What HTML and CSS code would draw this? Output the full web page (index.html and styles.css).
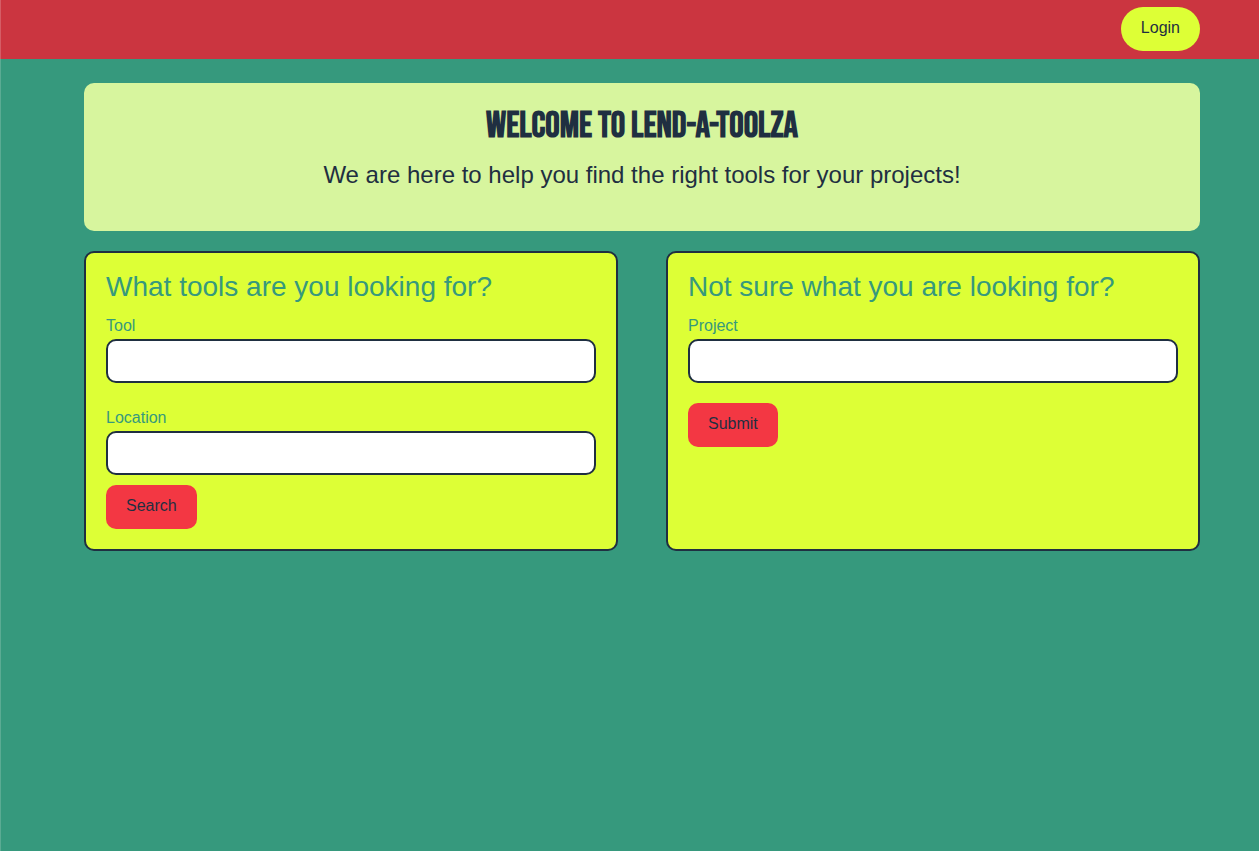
FILE: index.html
```html
<!DOCTYPE html>
<html lang="en">
<head>
<meta charset="utf-8">
<meta name="viewport" content="width=device-width, initial-scale=1">
<title>Lend-A-Toolza</title>
<link rel="stylesheet" href="styles.css">
</head>
<body>
<header class="navbar">
  <button class="btn btn-login" type="button">Login</button>
</header>
<main class="container">
  <section class="banner">
    <h1 class="banner-title">WELCOME TO LEND-A-TOOLZA</h1>
    <p class="banner-text">We are here to help you find the right tools for your projects!</p>
  </section>
  <div class="cards">
    <form class="card">
      <h2 class="card-title">What tools are you looking for?</h2>
      <label class="label" for="tool">Tool</label>
      <input class="input" id="tool" type="text">
      <label class="label label-next" for="location">Location</label>
      <input class="input" id="location" type="text">
      <button class="btn btn-search" type="submit">Search</button>
    </form>
    <form class="card">
      <h2 class="card-title">Not sure what you are looking for?</h2>
      <label class="label" for="project">Project</label>
      <input class="input" id="project" type="text">
      <button class="btn btn-submit" type="submit">Submit</button>
    </form>
  </div>
</main>
</body>
</html>
```
FILE: styles.css
```css
* {
  box-sizing: border-box;
}

body {
  display: flex;
  flex-direction: column;
  margin: 0;
  min-height: 100vh;
  background: #36997d;
  color: #1f2f41;
  font: 16px/24px "Liberation Sans", Arial, sans-serif;
}

.navbar {
  display: flex;
  justify-content: flex-end;
  padding: 7px 59px 8px 83px;
  border-left: 1px solid #d55d66;
  background: #cb3540;
}

.container {
  flex: 1;
  padding: 24px 59px 24px 83px;
  border-left: 1px solid #5bab93;
}

.banner {
  padding: 20px 20px 36px;
  border-radius: 10px;
  background: #d7f59e;
  text-align: center;
}

.banner-title {
  margin: 0 0 4px;
  font: bold 36px/48px "Bebas Neue", "DejaVu Sans Condensed", sans-serif;
}

.banner-text {
  margin: 0;
  font-size: 24px;
  line-height: 40px;
}

.cards {
  display: grid;
  grid-template-columns: 1fr 1fr;
  gap: 48px;
  margin-top: 20px;
}

.card {
  padding: 20px;
  border: 2px solid #1f2f41;
  border-radius: 10px;
  background: #ddff36;
  color: #36997d;
}

.card-title {
  margin: 0 0 14px;
  font-size: 28px;
  font-weight: 400;
  line-height: 28px;
}

.label {
  display: block;
  padding-bottom: 2px;
  line-height: 22px;
}

.label-next {
  margin-top: 24px;
}

.input {
  display: block;
  width: 100%;
  height: 44px;
  padding: 8px 12px;
  border: 2px solid #1f2f41;
  border-radius: 10px;
  background: #fff;
  color: #1f2f41;
  font: inherit;
}

.btn {
  display: block;
  padding: 9px 20px 11px;
  border: 0;
  border-radius: 10px;
  background: #f33743;
  color: #1f2f41;
  font: inherit;
  cursor: pointer;
}

.btn-login {
  border-radius: 22px;
  background: #ddff36;
}

.btn-search {
  margin-top: 10px;
}

.btn-submit {
  margin-top: 20px;
}
```
